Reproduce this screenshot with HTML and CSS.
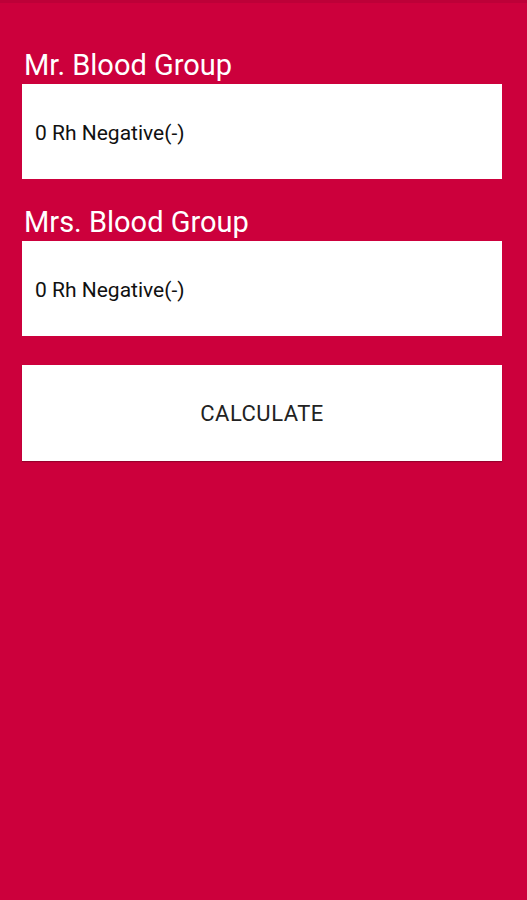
FILE: index.html
```html
<!DOCTYPE html>
<html lang="en">
<head>
    <meta charset="UTF-8">
    <meta name="viewport" content="width=device-width, initial-scale=1.0">
    <title>Blood Group</title>
    <link rel="stylesheet" href="styles.css">
</head>
<body>
    <div class="topbar"></div>

    <div class="content">
        <div class="field">
            <h2 class="label">Mr. Blood Group</h2>
            <div class="select">0 Rh Negative(-)</div>
        </div>

        <div class="field">
            <h2 class="label">Mrs. Blood Group</h2>
            <div class="select">0 Rh Negative(-)</div>
        </div>

        <button class="calc">CALCULATE</button>
    </div>
</body>
</html>
```

FILE: styles.css
```css
body {
    font-family: Roboto, 'Liberation Sans', sans-serif;
    margin: 0;
    padding: 0;
    background-color: #cc003c;
    min-height: 900px;
}

.topbar {
    height: 3px;
    background-color: #bd0038;
}

.content {
    padding: 44px 25px 0 22px;
    display: flex;
    flex-direction: column;
}

.field {
    margin-bottom: 25px;
}

.label {
    margin: 0 0 0 2px;
    font-size: 29px;
    font-weight: 400;
    line-height: 37px;
    color: #fff;
}

.select {
    height: 95px;
    background-color: #fff;
    display: flex;
    align-items: center;
    padding: 2px 13px 0;
    box-sizing: border-box;
    font-size: 21px;
    color: #111;
}

.calc {
    height: 96px;
    margin-top: 4px;
    border: none;
    border-radius: 0;
    background-color: #fff;
    font-family: Roboto, 'Liberation Sans', sans-serif;
    font-size: 22px;
    color: #222;
    letter-spacing: 0.5px;
    box-shadow: 0 1px 1px rgba(0, 0, 0, 0.25);
}
```
